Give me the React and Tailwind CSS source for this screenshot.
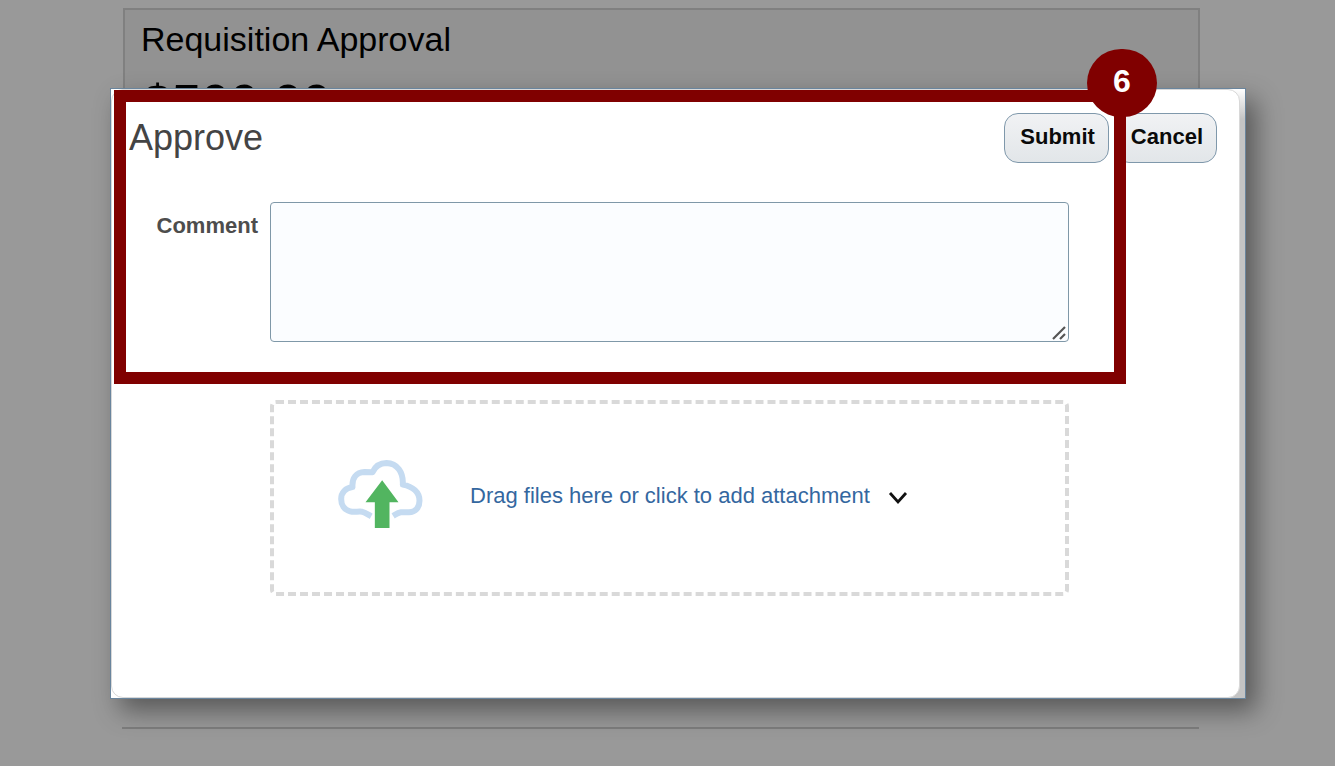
import { useState } from "react";

function CloudUploadIcon() {
  return (
    <svg
      viewBox="56 52 254 216"
      className="mb-1 h-[72px] w-[85px] shrink-0"
      fill="none"
      aria-hidden="true">
      <path
        d="M155 227C146 222 137 215 127 213C114 212 103 215 92 212C74 208 65 193 65 175C65 156 78 142 99 139C97 112 110 95 135 94L159 95C167 77 182 67 201 67C233 68 252 94 250 132C280 138 300 155 300 180C300 201 288 214 268 215L244 215C235 216 229 221 221 226"
        stroke="#c5dbf1"
        strokeWidth="18"
        strokeLinejoin="round"
      />
      <path
        d="M188 119L237 185H210V262H166V185H138Z"
        fill="#52b560"
      />
    </svg>
  );
}

function ChevronIcon() {
  return (
    <svg
      viewBox="0 0 20 14"
      className="mt-1 h-[14px] w-5 shrink-0"
      fill="none"
      aria-hidden="true">
      <path d="M2 2L10 11L18 2" stroke="#111" strokeWidth="2.8" />
    </svg>
  );
}

function ResizeGrip() {
  return (
    <svg
      viewBox="0 0 14 14"
      className="pointer-events-none absolute right-[3px] bottom-[2px] h-[14px] w-[14px]"
      fill="none"
      aria-hidden="true">
      <path
        d="M1 13L13 1M8 13L13 8"
        stroke="#555"
        strokeWidth="2.2"
      />
    </svg>
  );
}

function ActionButton({ children }) {
  return (
    <button
      type="button"
      className="h-[50px] rounded-[14px] border border-[#7f98ab] bg-linear-to-b from-[#f1f2f4] to-[#e2e6e9] pr-[13px] pb-[3px] pl-[15px] text-[22px] leading-7 font-bold text-[#0a0a0a]">
      {children}
    </button>
  );
}

// Numbered outline that marks the current step of the guide
function StepMarker({ step }) {
  return (
    <div className="pointer-events-none absolute inset-y-0 right-[113px] left-[2px] border-[12px] border-[#800000]">
      <div className="absolute -top-[53px] -right-[43px] flex h-[68px] w-[70px] items-center justify-center rounded-full bg-[#800000] pb-1 text-[32px] leading-9 font-bold text-white">
        {step}
      </div>
    </div>
  );
}

function ApproveDialog() {
  const [comment, setComment] = useState("");

  return (
    <div
      role="dialog"
      aria-labelledby="dialog-title"
      className="absolute top-[88px] right-[89px] left-[110px] border border-[#6a859d] bg-[linear-gradient(to_bottom,white,transparent_30px),linear-gradient(to_right,white_50%,#c4c4c4_50%)] shadow-[10px_12px_24px_rgba(0,0,0,0.42)]">
      <div className="mr-[5px] rounded-xl border border-[#d8d8d8] bg-white pb-[101px]">
        <div className="relative pb-[42px]">
          <div className="flex items-start justify-between pt-[23px] pr-[22px] pl-[17px]">
            <h2
              id="dialog-title"
              className="text-[36px] leading-[50px] text-[#444]">
              Approve
            </h2>
            <div className="flex gap-[6px]">
              <ActionButton>Submit</ActionButton>
              <ActionButton>Cancel</ActionButton>
            </div>
          </div>

          <div className="mt-[39px] grid grid-cols-[146px_1fr] gap-3 pr-[170px]">
            <label
              htmlFor="comment"
              className="mt-[10px] text-right text-[22px] leading-7 font-bold text-[#4d4d4d]">
              Comment
            </label>
            <div className="relative">
              <textarea
                id="comment"
                value={comment}
                onChange={(e) => setComment(e.target.value)}
                className="block h-[140px] w-full resize-none rounded border border-[#7f98a8] bg-[#fbfdff] p-3 text-[22px] leading-7"
              />
              <ResizeGrip />
            </div>
          </div>
          <StepMarker step={6} />
        </div>

        <div className="mt-4 pr-[170px] pl-[158px]">
          <button
            type="button"
            className="flex h-[196px] w-full items-center rounded-md border-4 border-dashed border-[#d9d9d9] pb-1 pl-[64px] text-[22px] leading-7 text-[#34679f]">
            <CloudUploadIcon />
            <span className="mr-[18px] ml-[47px]">
              Drag files here or click to add attachment
            </span>
            <ChevronIcon />
          </button>
        </div>
      </div>
    </div>
  );
}

function App() {
  return (
    <main className="relative min-h-screen bg-[#999] pt-2 font-['Liberation_Sans',Arial,sans-serif]">
      <section className="mr-[135px] ml-[123px] h-[640px] border-2 border-[#808080] bg-[#929292] px-4 pt-[7px] text-black">
        <h1 className="text-[34px] leading-[44px]">Requisition Approval</h1>
        <p className="mt-[10px] ml-0.5 text-[52px] leading-[64px] font-bold">
          $500.00
        </p>
      </section>
      <div className="mt-[79px] mr-[136px] ml-[122px] border-t-2 border-[#7d7d7d]" />
      <ApproveDialog />
    </main>
  );
}

export default App;
